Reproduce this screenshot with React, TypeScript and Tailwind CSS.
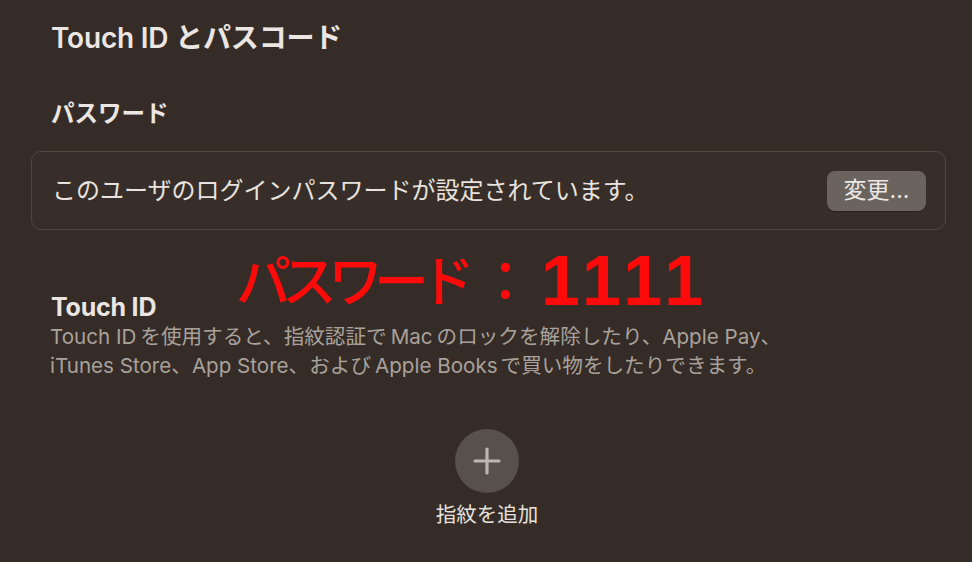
import React from "react";

export default function App() {
  const font = { fontFamily: '"Inter", "Noto Sans CJK JP", sans-serif' };
  return (
    <div className="w-[972px] h-[562px] bg-[#352c27] overflow-hidden text-[#ebe6e2]" style={font}>
      <div className="pt-[20px] pl-[51px] text-[28px] font-semibold leading-[36px] tracking-[-0.2px]">
        Touch ID とパスコード
      </div>
      <div className="pt-[43px] pl-[51px] text-[23.5px] font-semibold leading-[30px]">パスワード</div>
      <div className="mt-[22px] mx-[31px] w-[915px] h-[79px] rounded-[10px] border border-[#50473f] bg-[#372e29] flex items-center justify-between pl-[20px] pr-[19px]">
        <span className="text-[24px] leading-[30px] text-[#e8e3df]">このユーザのログインパスワードが設定されています。</span>
        <div className="w-[99px] h-[40px] rounded-[8px] bg-[#6a635e] shadow-[0_1px_1px_rgba(0,0,0,0.3)] flex items-center justify-center text-[23px] text-[#ece8e5]">
          変更...
        </div>
      </div>
      <div className="pl-[236px] mt-[20px] h-[62px] flex items-center text-[#ff0a0a] leading-[62px]">
        <span className="font-medium text-[55px] tracking-[-9px]">パスワード</span>
        <span className="font-medium text-[55px] ml-[12px]">：</span>
        <span className="font-bold ml-[8px] text-[70px] tracking-[6px]" style={{ fontFamily: '"Liberation Sans", "Noto Sans CJK JP", sans-serif' }}>1111</span>
      </div>
      <div className="pl-[51px] mt-[-20px] text-[25px] font-bold leading-[30px] tracking-[-0.2px]">Touch ID</div>
      <div className="pl-[50px] text-[20.6px] leading-[29px] text-[#a9a19b]">
        <div>Touch ID<span className="ml-[4px]">を使用すると、指紋認証で</span><span className="mx-[4px]">Mac</span>のロックを解除したり、Apple Pay、</div>
        <div>iTunes Store、App Store、および<span className="ml-[4px]">Apple Books</span><span className="ml-[3px]">で買い物をしたりできます。</span></div>
      </div>
      <div className="flex flex-col items-center mt-[49px] ml-[2px]">
        <div className="w-[64px] h-[64px] rounded-full bg-[#58504b] flex items-center justify-center">
          <svg width="30" height="30" viewBox="0 0 30 30">
            <path d="M15 3v24M3 15h24" stroke="#bdb6b1" strokeWidth="3.2" strokeLinecap="round" />
          </svg>
        </div>
        <div className="mt-[9px] text-[20.5px] leading-[26px] text-[#e6e1dd]">指紋を追加</div>
      </div>
    </div>
  );
}
